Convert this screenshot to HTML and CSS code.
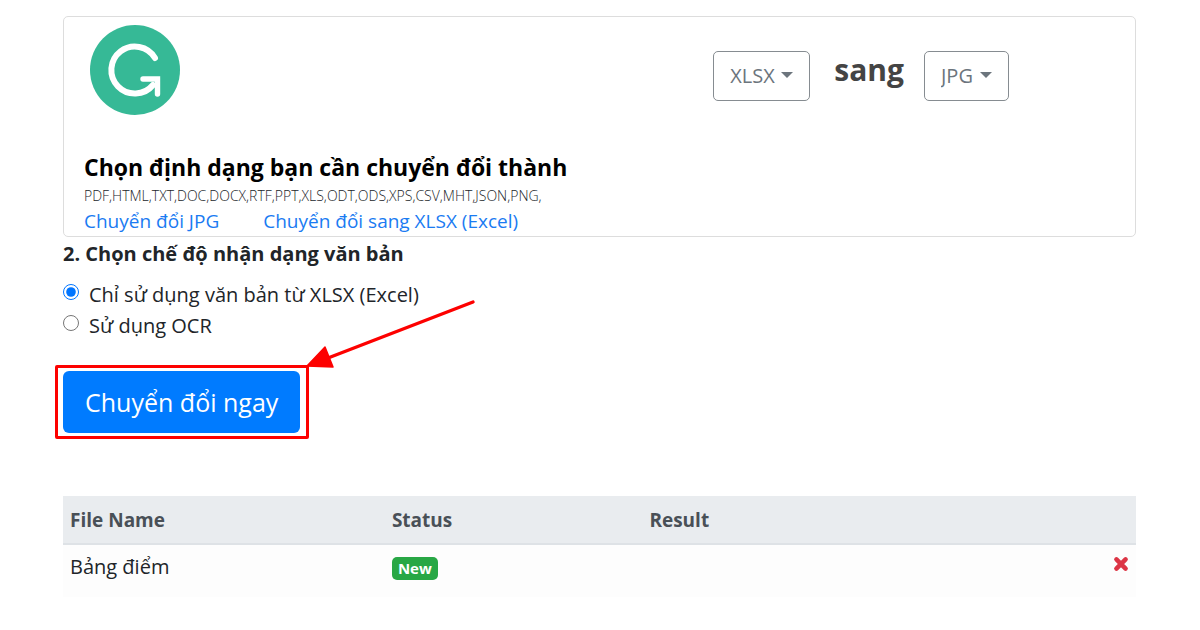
FILE: index.html
```html
<!DOCTYPE html>
<html lang="vi">
<head>
    <meta charset="UTF-8">
    <meta name="viewport" content="width=device-width, initial-scale=1.0">
    <title>Chuyển đổi XLSX sang JPG</title>
    <link rel="stylesheet" href="styles.css">
</head>
<body>
    <main class="page">
        <!-- Chọn định dạng -->
        <section class="card">
            <div class="card-top">
                <svg class="logo" viewBox="0 0 90 90" role="img" aria-label="Logo">
                    <circle cx="45" cy="45" r="45" fill="#36b996"/>
                    <path d="M65 33A23.5 23.5 0 1 0 63 60" fill="none" stroke="#fff" stroke-width="6" stroke-linecap="round"/>
                    <path d="M53 54H67.5V69" fill="none" stroke="#fff" stroke-width="5.4" stroke-linecap="round"/>
                </svg>
                <div class="formats">
                    <div class="dropdown">
                        <select class="from" aria-label="Định dạng nguồn">
                            <option>XLSX</option>
                        </select>
                    </div>
                    <span class="to-label">sang</span>
                    <div class="dropdown">
                        <select class="to" aria-label="Định dạng đích">
                            <option>JPG</option>
                        </select>
                    </div>
                </div>
            </div>
            <h1>Chọn định dạng bạn cần chuyển đổi thành</h1>
            <p class="format-list">PDF,HTML,TXT,DOC,DOCX,RTF,PPT,XLS,ODT,ODS,XPS,CSV,MHT,JSON,PNG,</p>
            <nav class="links">
                <a href="#">Chuyển đổi JPG</a>
                <a href="#">Chuyển đổi sang XLSX (Excel)</a>
            </nav>
        </section>

        <!-- Chế độ nhận dạng -->
        <fieldset class="mode">
            <legend>2. Chọn chế độ nhận dạng văn bản</legend>
            <label><input type="radio" name="mode" checked><span>Chỉ sử dụng văn bản từ XLSX (Excel)</span></label>
            <label><input type="radio" name="mode"><span>Sử dụng OCR</span></label>
        </fieldset>

        <div class="convert">
            <button class="btn-convert" type="button">Chuyển đổi ngay</button>
            <svg class="arrow" viewBox="0 0 170 70" aria-hidden="true">
                <path d="M167 4L22 60" stroke="#fd0100" stroke-width="3.4" stroke-linecap="round"/>
                <path d="M1 68L19 49L27 69z" fill="#fd0100" stroke="#fd0100" stroke-width="1.5" stroke-linejoin="round"/>
            </svg>
        </div>

        <!-- Danh sách tệp -->
        <table class="files">
            <thead>
                <tr>
                    <th class="col-name">File Name</th>
                    <th class="col-status">Status</th>
                    <th>Result</th>
                    <th class="col-remove"></th>
                </tr>
            </thead>
            <tbody>
                <tr>
                    <td>Bảng điểm</td>
                    <td><span class="badge">New</span></td>
                    <td></td>
                    <td class="col-remove">
                        <button class="btn-remove" type="button" aria-label="Xóa">
                            <svg viewBox="0 0 14 14"><path d="M3 3l8 8M11 3l-8 8" stroke="#dc3545" stroke-width="4" stroke-linecap="round"/></svg>
                        </button>
                    </td>
                </tr>
            </tbody>
        </table>
    </main>
</body>
</html>
```
FILE: styles.css
```css
* {
    box-sizing: border-box;
}

body {
    margin: 0;
    background-color: #ffffff;
    color: #212529;
    font-family: "Open Sans", "Noto Sans", sans-serif;
    font-size: 20px;
    line-height: 30px;
}

button, select {
    font: inherit;
}

.page {
    padding: 16px 64px 32px 63px;
}

.card {
    border: 1px solid #dddddd;
    border-radius: 5px;
    padding: 8px 20px 0;
}

.card-top {
    display: flex;
    justify-content: space-between;
    align-items: flex-start;
    margin: 0 106px 34px 6px;
}

.logo {
    width: 90px;
    height: 90px;
}

.formats {
    display: flex;
    align-items: flex-start;
    margin-top: 26px;
}

.dropdown {
    position: relative;
}

.dropdown select {
    appearance: none;
    height: 50px;
    padding: 0 16px;
    border: 1px solid #868c91;
    border-radius: 5px;
    background-color: transparent;
    color: #6c757d;
    cursor: pointer;
}

.dropdown .from {
    width: 97px;
}

.dropdown .to {
    width: 85px;
}

.dropdown::after {
    content: "";
    position: absolute;
    top: 21px;
    right: 17px;
    border: 6px solid transparent;
    border-top-color: #6c757d;
    border-bottom: 0;
    pointer-events: none;
}

.to-label {
    margin: 0 20px 0 24px;
    color: #444444;
    font-size: 30px;
    font-weight: bold;
    line-height: 38px;
}

h1 {
    margin: 0;
    color: #000000;
    font-size: 23px;
    line-height: 36px;
}

.format-list {
    margin: 0;
    font-size: 14px;
    font-weight: 300;
    line-height: 22px;
}

.links {
    display: flex;
    gap: 44px;
}

.links a {
    color: #1a7bf2;
    font-size: 19px;
    line-height: 29px;
    text-decoration: none;
}

.mode {
    margin: 0;
    padding: 0;
    border: 0;
}

.mode legend {
    padding: 2px 0 10px;
    font-weight: bold;
}

.mode label {
    display: flex;
    align-items: flex-start;
    gap: 10px;
    line-height: 31px;
}

.mode input {
    width: 16px;
    height: 16px;
    margin: 5px 0 0;
    accent-color: #0075ff;
}

/* Destaque do botão */
.convert {
    position: relative;
    width: fit-content;
    margin: 24px 0 0 -8px;
    padding: 3px 6px 3px 5px;
    border: 3px solid #fd0100;
    border-radius: 2px;
}

.btn-convert {
    display: block;
    height: 62px;
    padding: 0 22px;
    border: 0;
    border-radius: 6px;
    background-color: #007bff;
    color: #ffffff;
    font-size: 25px;
    cursor: pointer;
}

.arrow {
    position: absolute;
    left: 100%;
    bottom: 100%;
    width: 170px;
    height: 70px;
}

.files {
    width: 100%;
    margin-top: 57px;
    border-collapse: collapse;
    text-align: left;
}

.files th {
    height: 48px;
    padding: 0 7px;
    border-bottom: 2px solid #dee2e6;
    background-color: #e9ecef;
    color: #495057;
    font-size: 19px;
}

.files td {
    height: 53px;
    padding: 7px;
    background-color: #fdfdfd;
    vertical-align: top;
}

.col-name {
    width: 30%;
}

.col-status {
    width: 24%;
}

.files .col-remove {
    text-align: right;
}

.badge {
    display: inline-block;
    padding: 0 6px;
    border-radius: 5px;
    background-color: #28a745;
    color: #ffffff;
    font-size: 15px;
    font-weight: bold;
    line-height: 23px;
    vertical-align: middle;
}

.btn-remove {
    display: inline-block;
    width: 16px;
    height: 20px;
    padding: 0;
    border: 0;
    background: none;
    cursor: pointer;
}

.btn-remove svg {
    display: block;
    width: 16px;
    height: 16px;
}
```
